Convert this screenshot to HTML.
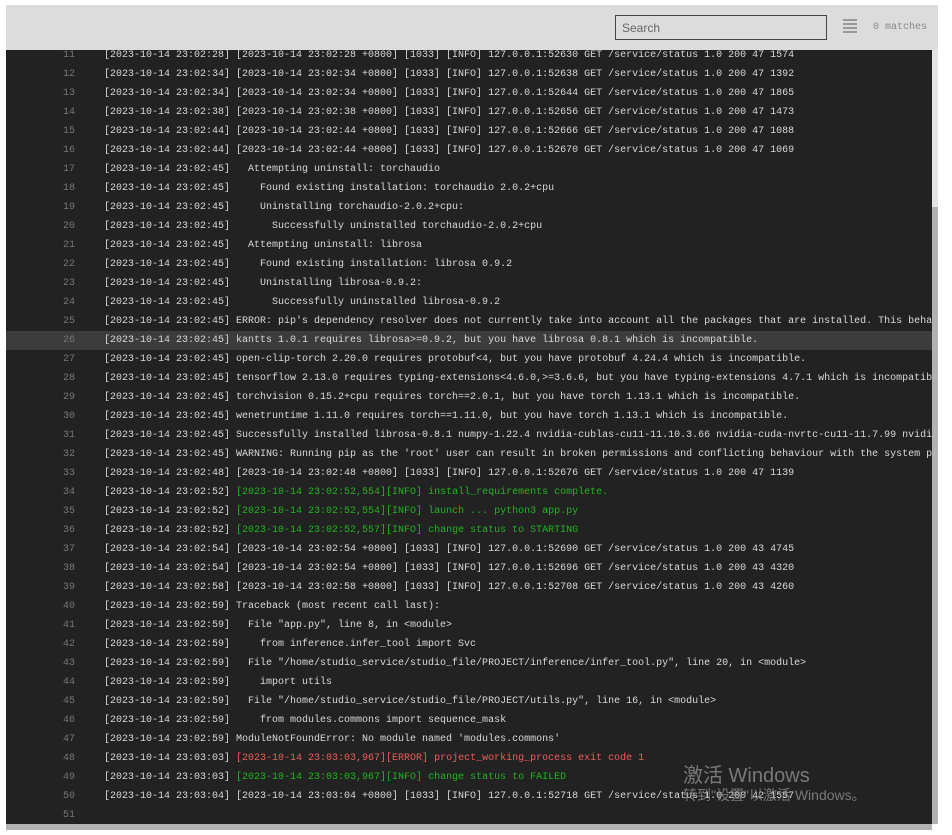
<!DOCTYPE html>
<html><head><meta charset="utf-8"><style>
body{margin:0;background:#fff;width:952px;height:835px;overflow:hidden;position:relative;font-family:"Liberation Mono","Noto Sans CJK SC",monospace}
#top{position:absolute;left:6px;top:5px;width:932px;height:45px;background:#dcdcdc}
#search{position:absolute;left:615px;top:15px;width:212px;height:25px;border:1px solid #444;background:#dcdcdc;font:12px "Liberation Sans",sans-serif;color:#666;box-sizing:border-box;padding:5px 6px}
#menu{position:absolute;left:843px;top:19px;width:14px}
#menu i{display:block;height:2px;background:#999;margin-bottom:2px}
#matches{position:absolute;left:873px;top:22px;font-size:10px;color:#888}
#log{position:absolute;left:6px;top:50px;width:926px;height:774px;background:#222;overflow:hidden}
.r{position:absolute;left:0;width:926px;height:19px;font-size:10px;line-height:19px;white-space:pre;color:#d8d8d8}
.r.h{background:#3c3c3c}
.n{position:absolute;left:0;width:69px;text-align:right;color:#777}
.t{position:absolute;left:98px}
.g{color:#1fb51f}.e{color:#f25b5b}
#vs{position:absolute;left:932px;top:50px;width:6px;height:774px;background:#e4e4e4}
#vt{position:absolute;left:932px;top:207px;width:6px;height:617px;background:#b2b2b2}
#hs{position:absolute;left:6px;top:824px;width:926px;height:6px;background:#b2b2b2}
#wm1{position:absolute;left:683px;top:759px;font:20px "Liberation Sans","Noto Sans CJK SC",sans-serif;color:rgba(150,150,150,.75)}
#wm2{position:absolute;left:683px;top:785px;font:14px "Liberation Sans","Noto Sans CJK SC",sans-serif;color:rgba(150,150,150,.75)}
</style></head><body>
<div id="top"></div>
<div id="search">Search</div>
<div id="menu"><i></i><i></i><i></i><i></i></div>
<div id="matches">0 matches</div>
<div id="log">
<div class="r" style="top:-4px"><span class="n">11</span><span class="t">[2023-10-14 23:02:28] [2023-10-14 23:02:28 +0800] [1033] [INFO] 127.0.0.1:52630 GET /service/status 1.0 200 47 1574</span></div>
<div class="r" style="top:15px"><span class="n">12</span><span class="t">[2023-10-14 23:02:34] [2023-10-14 23:02:34 +0800] [1033] [INFO] 127.0.0.1:52638 GET /service/status 1.0 200 47 1392</span></div>
<div class="r" style="top:34px"><span class="n">13</span><span class="t">[2023-10-14 23:02:34] [2023-10-14 23:02:34 +0800] [1033] [INFO] 127.0.0.1:52644 GET /service/status 1.0 200 47 1865</span></div>
<div class="r" style="top:53px"><span class="n">14</span><span class="t">[2023-10-14 23:02:38] [2023-10-14 23:02:38 +0800] [1033] [INFO] 127.0.0.1:52656 GET /service/status 1.0 200 47 1473</span></div>
<div class="r" style="top:72px"><span class="n">15</span><span class="t">[2023-10-14 23:02:44] [2023-10-14 23:02:44 +0800] [1033] [INFO] 127.0.0.1:52666 GET /service/status 1.0 200 47 1088</span></div>
<div class="r" style="top:91px"><span class="n">16</span><span class="t">[2023-10-14 23:02:44] [2023-10-14 23:02:44 +0800] [1033] [INFO] 127.0.0.1:52670 GET /service/status 1.0 200 47 1069</span></div>
<div class="r" style="top:110px"><span class="n">17</span><span class="t">[2023-10-14 23:02:45]   Attempting uninstall: torchaudio</span></div>
<div class="r" style="top:129px"><span class="n">18</span><span class="t">[2023-10-14 23:02:45]     Found existing installation: torchaudio 2.0.2+cpu</span></div>
<div class="r" style="top:148px"><span class="n">19</span><span class="t">[2023-10-14 23:02:45]     Uninstalling torchaudio-2.0.2+cpu:</span></div>
<div class="r" style="top:167px"><span class="n">20</span><span class="t">[2023-10-14 23:02:45]       Successfully uninstalled torchaudio-2.0.2+cpu</span></div>
<div class="r" style="top:186px"><span class="n">21</span><span class="t">[2023-10-14 23:02:45]   Attempting uninstall: librosa</span></div>
<div class="r" style="top:205px"><span class="n">22</span><span class="t">[2023-10-14 23:02:45]     Found existing installation: librosa 0.9.2</span></div>
<div class="r" style="top:224px"><span class="n">23</span><span class="t">[2023-10-14 23:02:45]     Uninstalling librosa-0.9.2:</span></div>
<div class="r" style="top:243px"><span class="n">24</span><span class="t">[2023-10-14 23:02:45]       Successfully uninstalled librosa-0.9.2</span></div>
<div class="r" style="top:262px"><span class="n">25</span><span class="t">[2023-10-14 23:02:45] ERROR: pip's dependency resolver does not currently take into account all the packages that are installed. This behaviour is the source of the following dependency conflicts.</span></div>
<div class="r h" style="top:281px"><span class="n">26</span><span class="t">[2023-10-14 23:02:45] kantts 1.0.1 requires librosa>=0.9.2, but you have librosa 0.8.1 which is incompatible.</span></div>
<div class="r" style="top:300px"><span class="n">27</span><span class="t">[2023-10-14 23:02:45] open-clip-torch 2.20.0 requires protobuf<4, but you have protobuf 4.24.4 which is incompatible.</span></div>
<div class="r" style="top:319px"><span class="n">28</span><span class="t">[2023-10-14 23:02:45] tensorflow 2.13.0 requires typing-extensions<4.6.0,>=3.6.6, but you have typing-extensions 4.7.1 which is incompatible.</span></div>
<div class="r" style="top:338px"><span class="n">29</span><span class="t">[2023-10-14 23:02:45] torchvision 0.15.2+cpu requires torch==2.0.1, but you have torch 1.13.1 which is incompatible.</span></div>
<div class="r" style="top:357px"><span class="n">30</span><span class="t">[2023-10-14 23:02:45] wenetruntime 1.11.0 requires torch==1.11.0, but you have torch 1.13.1 which is incompatible.</span></div>
<div class="r" style="top:376px"><span class="n">31</span><span class="t">[2023-10-14 23:02:45] Successfully installed librosa-0.8.1 numpy-1.22.4 nvidia-cublas-cu11-11.10.3.66 nvidia-cuda-nvrtc-cu11-11.7.99 nvidia-cuda-runtime</span></div>
<div class="r" style="top:395px"><span class="n">32</span><span class="t">[2023-10-14 23:02:45] WARNING: Running pip as the 'root' user can result in broken permissions and conflicting behaviour with the system package manager.</span></div>
<div class="r" style="top:414px"><span class="n">33</span><span class="t">[2023-10-14 23:02:48] [2023-10-14 23:02:48 +0800] [1033] [INFO] 127.0.0.1:52676 GET /service/status 1.0 200 47 1139</span></div>
<div class="r" style="top:433px"><span class="n">34</span><span class="t">[2023-10-14 23:02:52] <span class="g">[2023-10-14 23:02:52,554][INFO] install_requirements complete.</span></span></div>
<div class="r" style="top:452px"><span class="n">35</span><span class="t">[2023-10-14 23:02:52] <span class="g">[2023-10-14 23:02:52,554][INFO] launch ... python3 app.py</span></span></div>
<div class="r" style="top:471px"><span class="n">36</span><span class="t">[2023-10-14 23:02:52] <span class="g">[2023-10-14 23:02:52,557][INFO] change status to STARTING</span></span></div>
<div class="r" style="top:490px"><span class="n">37</span><span class="t">[2023-10-14 23:02:54] [2023-10-14 23:02:54 +0800] [1033] [INFO] 127.0.0.1:52690 GET /service/status 1.0 200 43 4745</span></div>
<div class="r" style="top:509px"><span class="n">38</span><span class="t">[2023-10-14 23:02:54] [2023-10-14 23:02:54 +0800] [1033] [INFO] 127.0.0.1:52696 GET /service/status 1.0 200 43 4320</span></div>
<div class="r" style="top:528px"><span class="n">39</span><span class="t">[2023-10-14 23:02:58] [2023-10-14 23:02:58 +0800] [1033] [INFO] 127.0.0.1:52708 GET /service/status 1.0 200 43 4260</span></div>
<div class="r" style="top:547px"><span class="n">40</span><span class="t">[2023-10-14 23:02:59] Traceback (most recent call last):</span></div>
<div class="r" style="top:566px"><span class="n">41</span><span class="t">[2023-10-14 23:02:59]   File "app.py", line 8, in &lt;module&gt;</span></div>
<div class="r" style="top:585px"><span class="n">42</span><span class="t">[2023-10-14 23:02:59]     from inference.infer_tool import Svc</span></div>
<div class="r" style="top:604px"><span class="n">43</span><span class="t">[2023-10-14 23:02:59]   File "/home/studio_service/studio_file/PROJECT/inference/infer_tool.py", line 20, in &lt;module&gt;</span></div>
<div class="r" style="top:623px"><span class="n">44</span><span class="t">[2023-10-14 23:02:59]     import utils</span></div>
<div class="r" style="top:642px"><span class="n">45</span><span class="t">[2023-10-14 23:02:59]   File "/home/studio_service/studio_file/PROJECT/utils.py", line 16, in &lt;module&gt;</span></div>
<div class="r" style="top:661px"><span class="n">46</span><span class="t">[2023-10-14 23:02:59]     from modules.commons import sequence_mask</span></div>
<div class="r" style="top:680px"><span class="n">47</span><span class="t">[2023-10-14 23:02:59] ModuleNotFoundError: No module named 'modules.commons'</span></div>
<div class="r" style="top:699px"><span class="n">48</span><span class="t">[2023-10-14 23:03:03] <span class="e">[2023-10-14 23:03:03,967][ERROR] project_working_process exit code 1</span></span></div>
<div class="r" style="top:718px"><span class="n">49</span><span class="t">[2023-10-14 23:03:03] <span class="g">[2023-10-14 23:03:03,967][INFO] change status to FAILED</span></span></div>
<div class="r" style="top:737px"><span class="n">50</span><span class="t">[2023-10-14 23:03:04] [2023-10-14 23:03:04 +0800] [1033] [INFO] 127.0.0.1:52718 GET /service/status 1.0 200 42 1557</span></div>
<div class="r" style="top:756px"><span class="n">51</span></div>
</div>
<div id="vs"></div><div id="vt"></div><div id="hs"></div>
<div id="wm1">激活 Windows</div>
<div id="wm2">转到"设置"以激活 Windows。</div>
</body></html>
